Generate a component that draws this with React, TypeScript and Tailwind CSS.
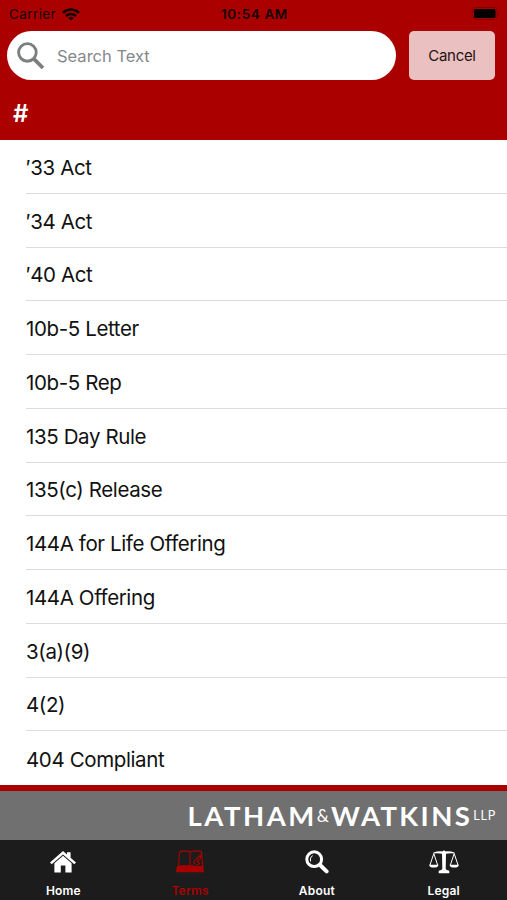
import React from 'react';

const TERMS = [
  '′33 Act',
  '′34 Act',
  '′40 Act',
  '10b-5 Letter',
  '10b-5 Rep',
  '135 Day Rule',
  '135(c) Release',
  '144A for Life Offering',
  '144A Offering',
  '3(a)(9)',
  '4(2)',
  '404 Compliant',
];

const WifiIcon = () => (
  <svg width="18" height="13" viewBox="0 0 18 13" fill="none" stroke="#160000" strokeWidth="2.5">
    <path d="M1 4.8C5.4.4 12.6.4 17 4.8" />
    <path d="M4 8C6.8 5.2 11.2 5.2 14 8" />
    <path d="M9 12.6L6.3 9.9C7.8 8.4 10.2 8.4 11.7 9.9Z" fill="#160000" stroke="none" />
  </svg>
);

const BatteryIcon = () => (
  <svg width="28" height="13" viewBox="0 0 28 13">
    <rect x="0.5" y="0.5" width="24.5" height="12" rx="3" fill="none" stroke="#820000" />
    <rect x="2" y="2" width="21.5" height="9" rx="1.5" fill="#050000" />
    <path d="M26.2 4.5C27.5 5 27.5 8 26.2 8.5Z" fill="#820000" />
  </svg>
);

const SearchIcon = () => (
  <svg width="28" height="28" viewBox="0 0 28 28" fill="none" stroke="#7c7f7f">
    <circle cx="10.4" cy="10.4" r="8.8" strokeWidth="2.9" />
    <path d="M16.6 16.6L26 26" strokeWidth="3.8" />
  </svg>
);

const HomeIcon = () => (
  <svg width="26" height="22" viewBox="0 0 26 22" fill="#fff">
    <path d="M13 0L17 3.6V1.2H20.6V6.8L26 11.4L24.3 13.2L13 3.4L1.7 13.2L0 11.4Z" />
    <path d="M13 4.8L21.6 12.2V21.6H15.4V14.6H10.8V21.6H4.4V12.2Z" />
  </svg>
);

const TermsIcon = () => (
  <svg width="30" height="24" viewBox="0 0 30 24" fill="none" stroke="#a80000" strokeWidth="1.2">
    <path d="M3.5 17L4.5 3.2Q4.6 1.2 6.5 1.2H13Q14.6 1.2 15 2.4V15.5" />
    <path d="M15 2.6Q15.8 1.2 18 1.2H25Q26.3 1.2 26.5 3L27.7 16" />
    <path d="M5 15.8H19M20 14.5Q18 12 20.5 10L25.2 5.2L26 8L22.2 11.4L24.5 13.2Q23.5 15 21 14.8" />
    <path d="M2 16H28.2L29 22.2H1Z" fill="#a80000" stroke="none" />
  </svg>
);

const AboutIcon = () => (
  <svg width="24" height="24" viewBox="0 0 24 24" fill="none" stroke="#fff">
    <circle cx="9.2" cy="9.2" r="7.4" strokeWidth="3" />
    <path d="M5.5 11.5Q4.5 7.8 7.5 5.5" strokeWidth="1" />
    <path d="M15 15L21.6 21.4" strokeWidth="4" strokeLinecap="round" />
  </svg>
);

const LegalIcon = () => (
  <svg width="30" height="24" viewBox="0 0 30 24" fill="#fff">
    <path d="M13.3 1.4Q15 -.6 16.7 1.4Q22 1.2 25.5 2.4V3.5Q21 2.7 17 3.8L16.7 18.8Q17 20.4 20.3 20.7V23.3H9.7V20.7Q13 20.4 13.3 18.8L13 3.8Q9 2.7 4.5 3.5V2.4Q8 1.2 13.3 1.4Z" />
    <path d="M0 14.7H9.6Q9 17.6 4.8 17.6Q.6 17.6 0 14.7ZM20.4 14.7H30Q29.4 17.6 25.2 17.6Q21 17.6 20.4 14.7Z" />
    <path d="M1 15L4.8 3.5L8.6 15M21.4 15L25.2 3.5L29 15" fill="none" stroke="#fff" strokeWidth="1" />
  </svg>
);

const TABS = [
  { label: 'Home', icon: <HomeIcon />, color: 'text-white' },
  { label: 'Terms', icon: <TermsIcon />, color: 'text-[#a80000]' },
  { label: 'About', icon: <AboutIcon />, color: 'text-white' },
  { label: 'Legal', icon: <LegalIcon />, color: 'text-white' },
];

export default function App() {
  return (
    <div className="flex h-[900px] w-[507px] flex-col overflow-hidden bg-white font-['Inter',sans-serif]">
      <header className="h-[140px] shrink-0 bg-[#ab0000]">
        <div className="grid h-[31px] grid-cols-3 items-center pr-[7px] pl-[9px] pb-[4px] text-[13.5px] text-[#160000]">
          <div className="flex items-center gap-[6px] pt-px">
            <span className="tracking-[0.4px]">Carrier</span>
            <WifiIcon />
          </div>
          <span className="pt-px text-center font-semibold tracking-[0.6px]">10:54 AM</span>
          <div className="flex justify-end">
            <BatteryIcon />
          </div>
        </div>
        <div className="flex gap-[13px] pl-[7px]">
          <div className="flex h-[49px] w-[389px] items-center rounded-full bg-white pl-[10px]">
            <SearchIcon />
            <span className="ml-[12px] pt-[2px] text-[16.5px] text-[#85878a]">Search Text</span>
          </div>
          <button className="h-[49px] w-[86px] rounded-[5px] bg-[#eac0c1] pt-[2px] text-[15px] tracking-[-0.3px] text-[#241313]">
            Cancel
          </button>
        </div>
        <h2 className="pt-[17px] pl-[13px] text-[24px] leading-[34px] font-semibold text-white">#</h2>
      </header>

      <ul className="h-[645px] shrink-0 pl-[26px]">
        {TERMS.map((term) => (
          <li
            key={term}
            className="flex h-[53.75px] items-center border-b border-[#dcdcdc] pt-[3.6px] text-[20.5px] tracking-[-0.38px] text-[#111] last:border-b-0"
          >
            {term}
          </li>
        ))}
      </ul>

      <div className="flex h-[55px] shrink-0 items-center justify-end border-t-[6px] border-[#ab0000] bg-[#707070] pt-px pr-[11px] font-['Lato',sans-serif] text-white">
        <span className="text-[27.5px] font-bold tracking-[2.5px]">LATHAM</span>
        <span className="mr-[2px] text-[17px]">&amp;</span>
        <span className="text-[27.5px] font-bold tracking-[2.4px]">WATKINS</span>
        <span className="ml-px text-[12.5px] tracking-[0.8px]">LLP</span>
      </div>

      <nav className="grid h-[60px] shrink-0 grid-cols-4 bg-[#1c1c1c]">
        {TABS.map((tab) => (
          <div key={tab.label} className={`flex flex-col items-center ${tab.color}`}>
            <div className="flex h-[43px] items-center">{tab.icon}</div>
            <span className="text-[12px] leading-[16px] font-semibold tracking-[0.2px]">{tab.label}</span>
          </div>
        ))}
      </nav>
    </div>
  );
}
